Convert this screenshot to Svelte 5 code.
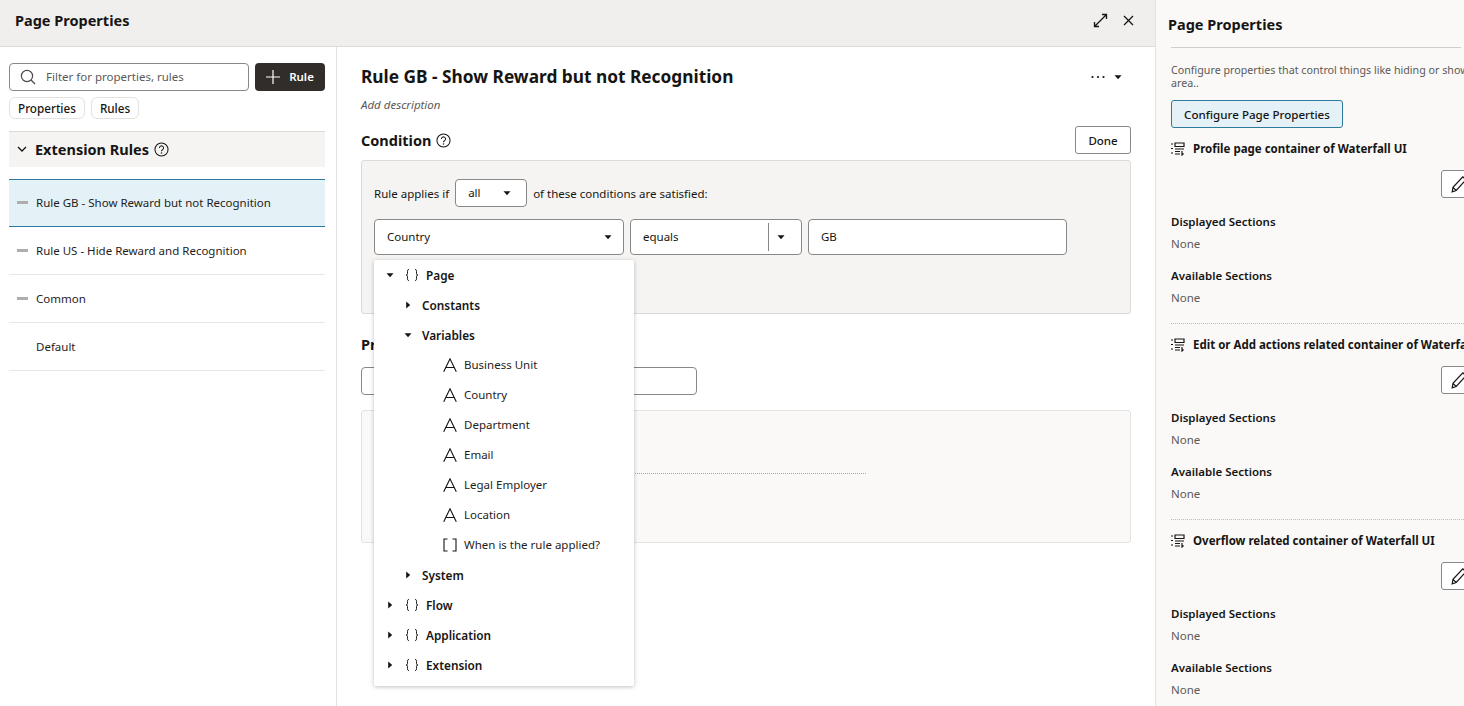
<script>
  const rules = [
    { name: 'Rule GB - Show Reward but not Recognition', mark: true, active: true },
    { name: 'Rule US - Hide Reward and Recognition', mark: true },
    { name: 'Common', mark: true },
    { name: 'Default', mark: false }
  ];
  const variables = [
    { name: 'Business Unit', icon: 'a' },
    { name: 'Country', icon: 'a' },
    { name: 'Department', icon: 'a' },
    { name: 'Email', icon: 'a' },
    { name: 'Legal Employer', icon: 'a' },
    { name: 'Location', icon: 'a' },
    { name: 'When is the rule applied?', icon: 'b' }
  ];
  const containers = [
    'Profile page container of Waterfall UI',
    'Edit or Add actions related container of Waterfall UI',
    'Overflow related container of Waterfall UI'
  ];
</script>

{#snippet caret(cls)}
  <svg class="caret {cls}" width="10" height="10" viewBox="0 0 10 10"><path d="M1.500 3.200h7L5 7.200z" /></svg>
{/snippet}

{#snippet help()}
  <svg class="help" width="15" height="15" viewBox="0 0 16 16">
    <circle cx="8" cy="8" r="7" fill="none" stroke="#161513" stroke-width="1.100" />
    <path d="M5.800 6.300a2.200 2.200 0 1 1 3.400 1.900c-.8.4-1.200.8-1.200 1.700" fill="none" stroke="#161513" stroke-width="1.100" />
    <circle cx="8" cy="11.800" r=".8" fill="#161513" />
  </svg>
{/snippet}

{#snippet braces()}
  <svg class="braces" width="14" height="14" viewBox="0 0 14 14" fill="none" stroke="#161513" stroke-width="1">
    <path d="M4 1.500c-1.500 0-1.500.7-1.500 2v2c0 1-.5 1.500-1.500 1.500 1 0 1.500.5 1.500 1.500v2c0 1.300 0 2 1.500 2" />
    <path d="M10 1.500c1.500 0 1.500.7 1.500 2v2c0 1 .5 1.500 1.500 1.500-1 0-1.500.5-1.500 1.500v2c0 1.300 0 2-1.500 2" />
  </svg>
{/snippet}

<div class="page">
  <div class="drawer">
    <header class="top">
      <h1>Page Properties</h1>
      <div class="top-icons">
        <svg width="15" height="15" viewBox="0 0 15 15" fill="none" stroke="#161513" stroke-width="1.300">
          <path d="M2 13 13 2M9 1.500h4.500V6M1.500 9v4.500H6" />
        </svg>
        <svg width="11" height="11" viewBox="0 0 11 11" fill="none" stroke="#161513" stroke-width="1.300">
          <path d="M1 1l9 9M10 1l-9 9" />
        </svg>
      </div>
    </header>

    <div class="body">
      <aside class="rules">
        <div class="filter-row">
          <div class="filter">
            <svg width="16" height="16" viewBox="0 0 16 16" fill="none" stroke="#4f4d4b" stroke-width="1.200">
              <circle cx="7" cy="7" r="5.600" /><path d="M11 11l4 4" />
            </svg>
            <span>Filter for properties, rules</span>
          </div>
          <button class="add">
            <svg width="14" height="14" viewBox="0 0 14 14" stroke="#fff" stroke-width="1.200"><path d="M7 0v14M0 7h14" /></svg>
            Rule
          </button>
        </div>
        <div class="chips">
          <span class="chip">Properties</span>
          <span class="chip">Rules</span>
        </div>
        <div class="ext-head">
          <svg width="10" height="10" viewBox="0 0 10 10" fill="none" stroke="#161513" stroke-width="1.300"><path d="M1 3l4 4 4-4" /></svg>
          <h2>Extension Rules</h2>
          {@render help()}
        </div>
        <ul class="rule-list">
          {#each rules as rule}
            <li class:active={rule.active}>
              <i class="mark" class:hidden={!rule.mark}></i>
              {rule.name}
            </li>
          {/each}
        </ul>
      </aside>

      <main class="editor">
        <div class="title-row">
          <h2>Rule GB - Show Reward but not Recognition</h2>
          <div class="more">
            <svg width="14" height="4" viewBox="0 0 14 4" fill="#161513"><circle cx="1.500" cy="2" r="1.100" /><circle cx="7" cy="2" r="1.100" /><circle cx="12.500" cy="2" r="1.100" /></svg>
            {@render caret('')}
          </div>
        </div>
        <p class="desc">Add description</p>

        <div class="cond-head">
          <h3>Condition</h3>
          {@render help()}
          <button class="done">Done</button>
        </div>

        <section class="cond">
          <div class="applies">
            Rule applies if
            <div class="box all"><span>all</span>{@render caret('')}</div>
            of these conditions are satisfied:
          </div>
          <div class="fields">
            <div class="box country"><span>Country</span>{@render caret('')}</div>
            <div class="box equals"><span>equals</span><i class="sep"></i>{@render caret('')}</div>
            <div class="box gb"><span>GB</span></div>
          </div>
        </section>

        <h3 class="prop-head">Properties</h3>
        <div class="box prop-input"></div>
        <section class="prop-panel">
          <div class="dots"></div>
        </section>

        <div class="menu">
          <div class="row lv0">{@render caret('')}{@render braces()}<b>Page</b></div>
          <div class="row lv1">{@render caret('right')}<b>Constants</b></div>
          <div class="row lv1">{@render caret('')}<b>Variables</b></div>
          {#each variables as v}
            <div class="row lv2">
              {#if v.icon === 'a'}
                <svg class="type" width="14" height="14" viewBox="0 0 14 14" fill="none" stroke="#161513" stroke-width="1.100"><path d="M.7 13.800 7 .8l6.300 13M2.800 9.500h8.400" /></svg>
              {:else}
                <svg class="type" width="14" height="14" viewBox="0 0 14 14" fill="none" stroke="#161513" stroke-width="1.100"><path d="M4.500 1h-3.500v12h3.500M9.500 1h3.500v12h-3.500" /></svg>
              {/if}
              <span>{v.name}</span>
            </div>
          {/each}
          <div class="row lv1">{@render caret('right')}<b>System</b></div>
          <div class="row lv0">{@render caret('right')}{@render braces()}<b>Flow</b></div>
          <div class="row lv0">{@render caret('right')}{@render braces()}<b>Application</b></div>
          <div class="row lv0">{@render caret('right')}{@render braces()}<b>Extension</b></div>
        </div>
      </main>
    </div>
  </div>

  <aside class="side">
    <h2>Page Properties</h2>
    <div class="side-inner">
      <p class="intro">Configure properties that control things like hiding or showing sections within this page area..</p>
      <button class="config">Configure Page Properties</button>
      {#each containers as name, i}
        <section class="container" class:first={i === 0}>
          <div class="c-title">
            <svg width="14" height="14" viewBox="0 0 14 14" fill="none" stroke="#161513" stroke-width="1.200">
              <path d="M0 2h2M0 6.500h2M0 11h2M4 1h9v3.500H4zM4 7h9M4 9.500h5M4 12h5M11 9v4l1.500-1.500" />
            </svg>
            <span>{name}</span>
          </div>
          <div class="edit-row">
            <button class="edit" aria-label="Edit">
              <svg width="18" height="18" viewBox="0 0 18 18" fill="none" stroke="#161513" stroke-width="1.200">
                <path d="M2.200 16.800l.8-4.500L12.800 1.800l3.200 3L6.200 15.500z M3 12.300l3.200 3.200" />
              </svg>
            </button>
          </div>
          <h4>Displayed Sections</h4>
          <p>None</p>
          <h4 class="avail">Available Sections</h4>
          <p>None</p>
        </section>
      {/each}
    </div>
  </aside>
</div>

<style>
  :global(body) {
    margin: 0;
    overflow: hidden;
    background: #fff;
    color: #161513;
    font-family: "Noto Sans", "Open Sans", sans-serif;
    font-size: 11.500px;
  }
  * { box-sizing: border-box; }
  h1, h2, h3, h4, p, ul { margin: 0; padding: 0; }
  button { font-family: inherit; }

  .page { display: flex; width: 1464px; height: 706px; overflow: hidden; }
  .drawer { width: 1155px; flex: none; display: flex; flex-direction: column; }

  .top {
    height: 47px;
    flex: none;
    background: #f1efed;
    border-bottom: 1px solid #dcdad8;
    display: flex;
    align-items: center;
    justify-content: space-between;
    padding: 0 21px 6px 15px;
  }
  .top h1 { font-size: 14.500px; font-weight: 700; }
  .top-icons { display: flex; align-items: center; gap: 15px; }

  .body { flex: 1; display: flex; min-height: 0; }

  .rules { width: 337px; flex: none; border-right: 1px solid #e4e2e0; padding: 16px 11px 0 9px; }
  .filter-row { display: flex; gap: 6px; }
  .filter {
    width: 240px;
    height: 28px;
    border: 1px solid #8a8886;
    border-radius: 4px;
    display: flex;
    align-items: center;
    gap: 10px;
    padding: 0 10px;
    color: #5b5957;
  }
  .filter span { padding-bottom: 2px; }
  .add {
    width: 70px;
    height: 28px;
    background: #312d2a;
    color: #fff;
    border: 0;
    border-radius: 4px;
    display: flex;
    align-items: center;
    justify-content: center;
    gap: 9px;
    font-size: 11.500px;
    font-weight: 600;
    padding: 0 0 1px;
  }
  .chips { display: flex; gap: 6px; margin-top: 6px; }
  .chip {
    height: 22px;
    padding: 0 8px 1px;
    border: 1px solid #e4e2e0;
    border-radius: 6px;
    display: flex;
    align-items: center;
    font-size: 11.700px;
    font-weight: 500;
  }
  .ext-head {
    height: 36px;
    margin-top: 12px;
    background: #f5f4f2;
    border-top: 1px solid #dcdad8;
    display: flex;
    align-items: center;
    padding: 0 0 1px 8px;
  }
  .ext-head h2 { font-size: 14.500px; font-weight: 700; margin: 0 5px 0 8px; }
  .rule-list { list-style: none; margin-top: 12px; }
  .rule-list li {
    height: 48px;
    display: flex;
    align-items: center;
    gap: 8px;
    padding-left: 8px;
    border-bottom: 1px solid #e9e7e5;
    color: #1f1d1b;
  }
  .rule-list li.active {
    background: #e4f1f7;
    border-top: 1px solid #2d7a9e;
    border-bottom: 1px solid #2d7a9e;
    padding-bottom: 2px;
  }
  .mark { width: 11px; height: 3px; background: #b0aeac; }
  .mark.hidden { background: none; }

  .editor { position: relative; flex: 1; padding: 17px 24px 0; }
  .title-row { display: flex; justify-content: space-between; align-items: center; }
  .title-row h2 { font-size: 17.300px; font-weight: 700; line-height: 24px; padding-top: 1px; }
  .more { display: flex; align-items: center; gap: 8px; padding-right: 8px; }
  .desc { margin-top: 7px; font-style: italic; color: #5b5957; line-height: 18px; }

  .cond-head { display: flex; align-items: center; gap: 5px; margin-top: 11px; height: 30px; }
  .cond-head h3, .prop-head { font-size: 14.500px; font-weight: 700; }
  .done {
    margin-left: auto;
    width: 56px;
    height: 28px;
    background: #fff;
    border: 1px solid #8a8886;
    border-radius: 3px;
    font-size: 11.500px;
    font-weight: 500;
    color: #161513;
  }
  .cond {
    margin-top: 5px;
    height: 154px;
    background: #f5f4f2;
    border: 1px solid #dcdad8;
    border-radius: 3px;
    padding: 18px 12px 0;
  }
  .applies { display: flex; align-items: center; gap: 6px; }
  .box {
    background: #fff;
    border: 1px solid #8a8886;
    border-radius: 4px;
    display: flex;
    align-items: center;
    justify-content: space-between;
  }
  .box span { padding-bottom: 1px; }
  .all { width: 72px; height: 28px; padding: 0 14px 0 12px; }
  .fields { display: flex; gap: 6px; margin-top: 12px; }
  .fields .box { height: 36px; padding: 0 10px 0 12px; }
  .country { width: 250px; }
  .fields .equals { width: 172px; padding-right: 15px; }
  .equals span { flex: 1; }
  .sep { width: 1px; height: 28px; background: #8a8886; margin-right: 7px; }
  .gb { width: 259px; }

  .prop-head { margin-top: 19px; line-height: 22px; }
  .prop-input { width: 336px; height: 28px; margin-top: 12px; }
  .prop-panel {
    position: relative;
    margin-top: 15px;
    height: 133px;
    background: #faf9f8;
    border: 1px solid #e4e2e0;
    border-radius: 3px;
  }
  .dots { position: absolute; left: 200px; top: 62px; width: 304px; border-top: 1px dotted #a9a7a5; }

  .menu {
    position: absolute;
    left: 37px;
    top: 213px;
    width: 260px;
    height: 426px;
    background: #fff;
    border-radius: 2px;
    box-shadow: 0 1px 4px rgba(0, 0, 0, .25);
    padding: 0 0 5px;
  }
  .row { height: 30px; display: flex; align-items: center; color: #1f1d1b; }
  .row b { font-size: 11.800px; font-weight: 600; color: #161513; }
  .lv0 { padding-left: 11px; }
  .lv0 b { margin-left: 7px; }
  .lv1 { padding-left: 29px; }
  .lv1 b { margin-left: 9px; }
  .lv2 { padding-left: 69px; }
  .lv2 span { margin-left: 7px; padding-bottom: 1px; }
  .braces { margin-left: 10px; }
  .caret path { fill: #161513; }
  .caret.right { transform: rotate(-90deg); }

  .side {
    flex: 1;
    min-width: 0;
    background: #faf9f8;
    border-left: 1px solid #e4e2e0;
    padding: 13px 0 0 12px;
    overflow: hidden;
  }
  .side h2 { font-size: 14.500px; font-weight: 700; line-height: 22px; padding-bottom: 12px; }
  .side-inner { width: 445px; margin-left: 3px; }
  .intro {
    width: 445px;
    padding-top: 17px;
    font-size: 10.700px;
    line-height: 13px;
    color: #5b5957;
    position: relative;
  }
  .intro::before {
    content: "";
    position: absolute;
    left: 0;
    top: 0;
    width: 290px;
    border-top: 1px solid #cfcdcb;
  }
  .config {
    display: block;
    margin-top: 10px;
    width: 172px;
    height: 28px;
    background: #e4f1f7;
    border: 1px solid #2d7a9e;
    border-radius: 3px;
    font-size: 11.600px;
    font-weight: 500;
    color: #161513;
    padding: 0;
  }
  .container { padding-top: 12px; border-top: 1px dotted #bdbbb9; height: 196px; }
  .container.first { border-top: 0; height: 195px; }
  .c-title { display: flex; align-items: center; gap: 8px; font-weight: 700; font-size: 11.500px; white-space: nowrap; line-height: 18px; }
  .edit-row { margin-top: 12px; padding-left: 270px; }
  .edit {
    display: flex;
    align-items: center;
    justify-content: center;
    width: 36px;
    height: 28px;
    background: #fff;
    border: 1px solid #8a8886;
    border-radius: 3px;
    padding: 0;
  }
  .container h4 { margin-top: 15px; font-size: 11.500px; font-weight: 600; line-height: 18px; }
  .container h4.avail { margin-top: 14px; }
  .container p { margin-top: 4px; color: #5b5957; line-height: 18px; }
</style>
